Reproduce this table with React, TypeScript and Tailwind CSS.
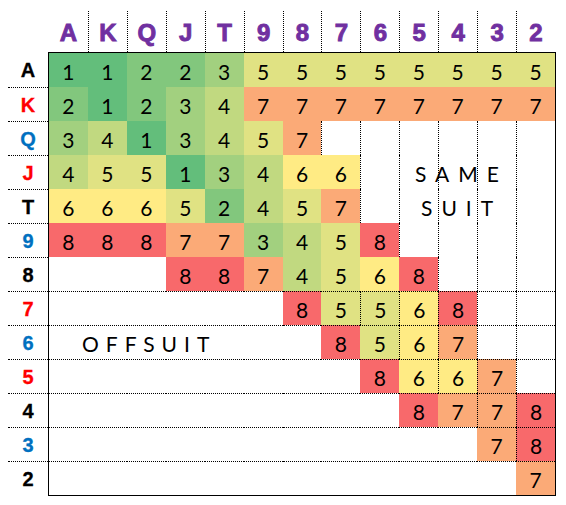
const RANKS = ["A", "K", "Q", "J", "T", "9", "8", "7", "6", "5", "4", "3", "2"];

const LABEL_COLORS = [
	"text-black",
	"text-[#ff0000]",
	"text-[#0070c0]",
	"text-[#ff0000]",
	"text-black",
	"text-[#0070c0]",
	"text-black",
	"text-[#ff0000]",
	"text-[#0070c0]",
	"text-[#ff0000]",
	"text-black",
	"text-[#0070c0]",
	"text-black",
];

// 0 = empty cell
const CHART: number[][] = [
	[1, 1, 2, 2, 3, 5, 5, 5, 5, 5, 5, 5, 5],
	[2, 1, 2, 3, 4, 7, 7, 7, 7, 7, 7, 7, 7],
	[3, 4, 1, 3, 4, 5, 7, 0, 0, 0, 0, 0, 0],
	[4, 5, 5, 1, 3, 4, 6, 6, 0, 0, 0, 0, 0],
	[6, 6, 6, 5, 2, 4, 5, 7, 0, 0, 0, 0, 0],
	[8, 8, 8, 7, 7, 3, 4, 5, 8, 0, 0, 0, 0],
	[0, 0, 0, 8, 8, 7, 4, 5, 6, 8, 0, 0, 0],
	[0, 0, 0, 0, 0, 0, 8, 5, 5, 6, 8, 0, 0],
	[0, 0, 0, 0, 0, 0, 0, 8, 5, 6, 7, 0, 0],
	[0, 0, 0, 0, 0, 0, 0, 0, 8, 6, 6, 7, 0],
	[0, 0, 0, 0, 0, 0, 0, 0, 0, 8, 7, 7, 8],
	[0, 0, 0, 0, 0, 0, 0, 0, 0, 0, 0, 7, 8],
	[0, 0, 0, 0, 0, 0, 0, 0, 0, 0, 0, 0, 7],
];

const FILL: Record<number, string> = {
	1: "bg-[#63be7b]",
	2: "bg-[#82c77d]",
	3: "bg-[#a2d07f]",
	4: "bg-[#c1d980]",
	5: "bg-[#e0e283]",
	6: "bg-[#ffeb84]",
	7: "bg-[#fbaa77]",
	8: "bg-[#f8696b]",
};

interface CellProps {
	value: number;
	row: number;
	col: number;
}

const Cell: React.FC<CellProps> = ({ value, row, col }) => {
	const dottedLeft = col > row && (value === 0 || row >= 7);
	const dottedTop = row >= 7;

	return (
		<div
			className={`flex h-[34px] items-center justify-center border-black border-dotted pt-[3px] text-[21px] text-black ${
				value ? FILL[value] : "bg-white"
			} ${dottedLeft ? "border-l" : ""} ${dottedTop ? "border-t" : ""}`}
		>
			{value ? value : ""}
		</div>
	);
};

export default function App() {
	return (
		<div className="h-[505px] w-[566px] bg-white font-['Lato',sans-serif]">
			{/* column ranks */}
			<div className="mt-[11px] ml-[49px] grid h-[41px] w-[506px] grid-cols-[repeat(13,1fr)]">
				{RANKS.map((rank, i) => (
					<div
						key={rank}
						className={`flex items-center justify-center border-black border-dotted pt-[2px] font-['Liberation_Sans',sans-serif] font-bold text-[#7030a0] text-[24px] [-webkit-text-stroke:0.9px_#7030a0] ${
							i > 0 ? "border-l" : ""
						}`}
					>
						{rank}
					</div>
				))}
			</div>

			<div className="flex">
				{/* row ranks */}
				<div className="ml-[8px] flex w-[40px] flex-col pt-px">
					{RANKS.map((rank, i) => (
						<div
							key={rank}
							className={`flex h-[34px] items-center justify-center border-black border-dotted font-['Liberation_Sans',sans-serif] font-bold text-[20px] [-webkit-text-stroke:0.3px_currentColor] ${
								LABEL_COLORS[i]
							} ${i > 0 ? "border-t" : ""}`}
						>
							{rank}
						</div>
					))}
				</div>

				<div className="relative w-[508px] border border-black">
					<div className="grid grid-cols-[repeat(13,1fr)]">
						{CHART.map((cells, r) =>
							cells.map((value, c) => (
								<Cell key={`${r}-${c}`} value={value} row={r} col={c} />
							)),
						)}
					</div>

					<div className="absolute top-[272px] left-[33px] flex h-[34px] items-center pt-[3px] text-[21px] text-black tracking-[7px]">
						OFFSUIT
					</div>
					<div className="absolute top-[102px] left-[366px] flex h-[34px] items-center pt-[3px] text-[21px] text-black tracking-[9px]">
						SAME
					</div>
					<div className="absolute top-[136px] left-[372px] flex h-[34px] items-center pt-[3px] text-[21px] text-black tracking-[9px]">
						SUIT
					</div>
				</div>
			</div>
		</div>
	);
}
